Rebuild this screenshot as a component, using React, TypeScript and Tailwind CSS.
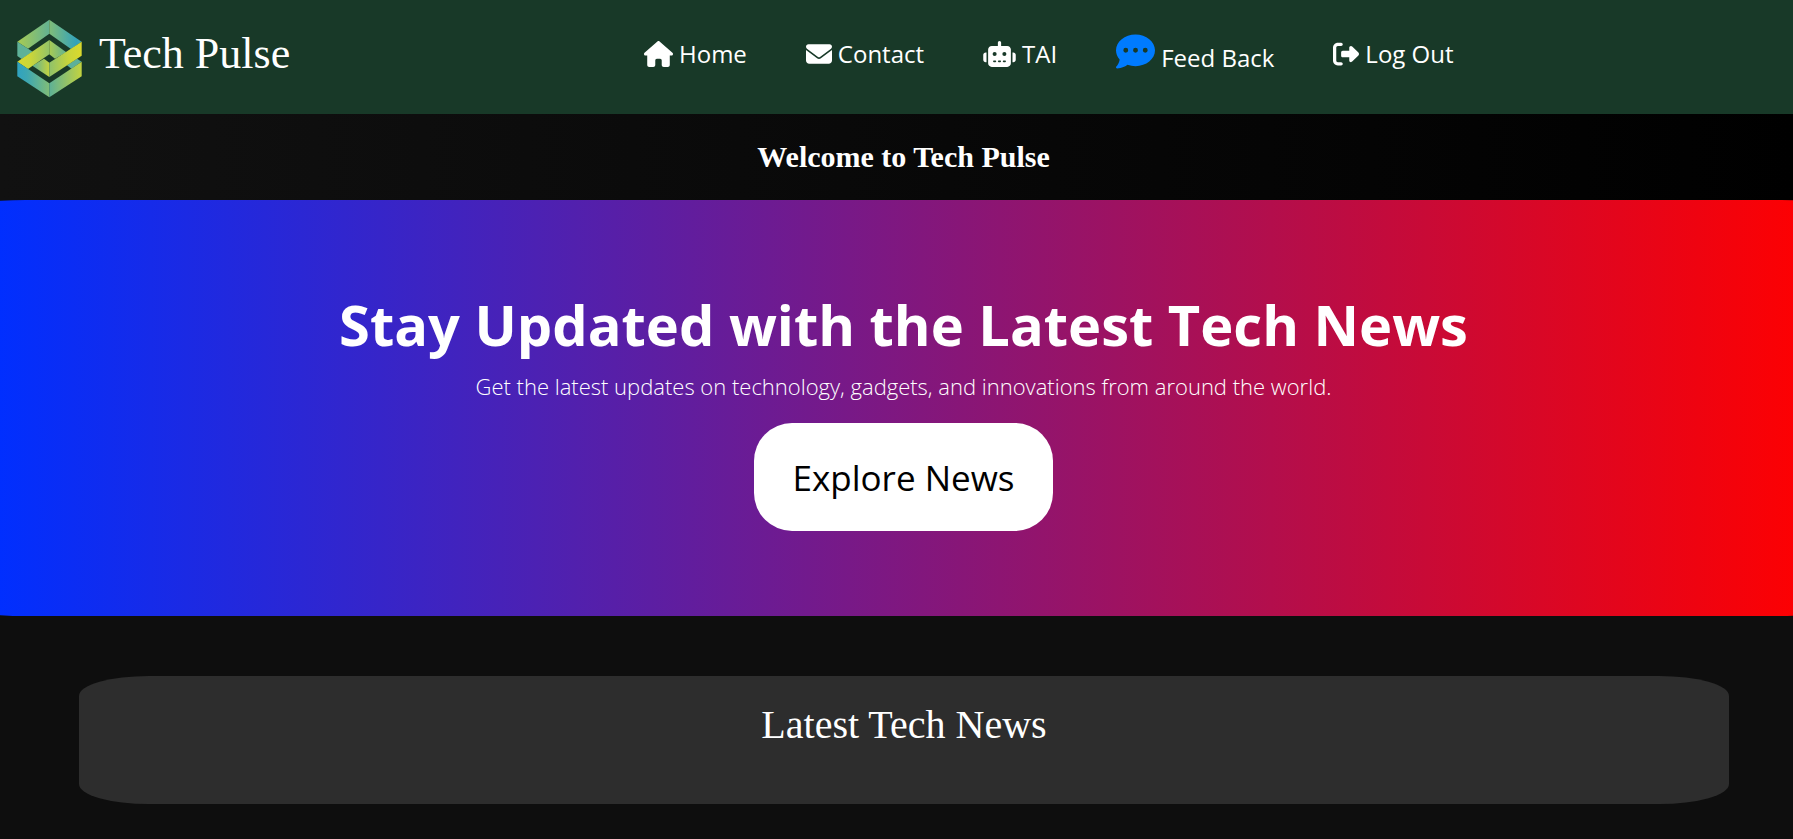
import type { ReactNode } from 'react';
import {
  FaCommentDots,
  FaEnvelope,
  FaHouse,
  FaRightFromBracket,
  FaRobot,
} from 'react-icons/fa6';

type TNavItem = {
  label: string;
  icon: ReactNode;
};

const navItems: TNavItem[] = [
  { label: 'Home', icon: <FaHouse className="h-[26px] w-[29px]" /> },
  { label: 'Contact', icon: <FaEnvelope className="size-[26px]" /> },
  { label: 'TAI', icon: <FaRobot className="h-[26px] w-[33px]" /> },
  {
    label: 'Feed Back',
    icon: <FaCommentDots className="-mt-[6px] size-[39px] text-[#007bff]" />,
  },
  { label: 'Log Out', icon: <FaRightFromBracket className="size-[26px]" /> },
];

const Logo = () => (
  <svg viewBox="0 0 270 285" className="h-[95px] w-[90px]" aria-hidden="true">
    <defs>
      <linearGradient id="lime-teal">
        <stop offset="0" stopColor="#a9cb52" />
        <stop offset="1" stopColor="#62b292" />
      </linearGradient>
      <linearGradient id="green-blue">
        <stop offset="0" stopColor="#80bd78" />
        <stop offset="0.85" stopColor="#32a2bb" />
        <stop offset="1" stopColor="#4fa9a5" />
      </linearGradient>
      <linearGradient id="yellow-green">
        <stop offset="0" stopColor="#d8d930" />
        <stop offset="0.4" stopColor="#cbd638" />
        <stop offset="1" stopColor="#94c368" />
      </linearGradient>
      <linearGradient id="green-yellow">
        <stop offset="0" stopColor="#8fc26b" />
        <stop offset="0.6" stopColor="#c8d53a" />
        <stop offset="1" stopColor="#dad92d" />
      </linearGradient>
      <linearGradient id="blue-green">
        <stop offset="0" stopColor="#2fa2c0" />
        <stop offset="0.3" stopColor="#3da7b2" />
        <stop offset="1" stopColor="#80bd78" />
      </linearGradient>
      <linearGradient id="teal-lime">
        <stop offset="0" stopColor="#5db096" />
        <stop offset="1" stopColor="#c3d33f" />
      </linearGradient>
    </defs>
    <path d="M37 95 133 29V71L69 116Z" fill="url(#lime-teal)" />
    <path d="M133 29 230 95 198 117 133 71Z" fill="url(#green-blue)" />
    <path d="M37 95 69 116 83 125 50 147 37 138Z" fill="#5eb198" />
    <path d="M230 155 216 146 186 166 199 176Z" fill="#5db09a" />
    <path d="M133 90 184 127 150 146 133 133Z" fill="url(#lime-teal)" />
    <path d="M117 146 133 158V201L82 167Z" fill="url(#teal-lime)" />
    <path d="M37 155 133 90V133L69 177Z" fill="url(#yellow-green)" />
    <path d="M230 95V137L133 201V158Z" fill="url(#green-yellow)" />
    <path d="M37 155 133 220V262L37 199Z" fill="url(#blue-green)" />
    <path d="M133 220 230 155V199L133 262Z" fill="url(#teal-lime)" />
  </svg>
);

const Header = () => (
  <header className="flex h-[114px] items-start bg-[#183928] text-white">
    <a href="#" className="flex w-[644px] shrink-0 items-start pt-[10px] pl-[5px]">
      <Logo />
      <span className="pt-[18px] pl-1 font-['Liberation_Serif',serif] text-[44px] leading-[52px]">
        Tech Pulse
      </span>
    </a>
    <nav className="flex h-[108px] items-center gap-[59px]">
      {navItems.map((item) => (
        <a
          key={item.label}
          href="#"
          className="flex items-end gap-[6px] text-2xl leading-[26px] whitespace-nowrap"
        >
          {item.icon}
          {item.label}
        </a>
      ))}
    </nav>
  </header>
);

const Hero = () => (
  <section className="-mx-16 flex h-[416px] flex-col items-center rounded-[90px/20px] bg-linear-to-r/srgb from-[#002fff] from-3% to-[#ff0000] to-97% pt-[82px] text-center text-white">
    <h1 className="text-[56px] leading-[84px] font-bold whitespace-nowrap">
      Stay Updated with the Latest Tech News
    </h1>
    <p className="pt-[2px] text-[22px] leading-9 font-light">
      Get the latest updates on technology, gadgets, and innovations from around
      the world.
    </p>
    <button
      type="button"
      className="mt-[19px] rounded-[38px] bg-white px-[39px] pt-[29px] pb-[27px] text-[35px] leading-[52px] text-black"
    >
      Explore News
    </button>
  </section>
);

const LatestNews = () => (
  <section className="mr-16 ml-[65px] mt-[60px] h-32 rounded-[70px/20px] bg-[#2d2d2d] pt-[26px] text-center">
    <h2 className="font-['Liberation_Serif',serif] text-[40px] leading-[46px]">
      Latest Tech News
    </h2>
  </section>
);

const App = () => {
  return (
    <div className="min-h-screen bg-[#0e0e0e] font-['Open_Sans',sans-serif] text-white">
      <Header />
      <main className="overflow-hidden">
        <div className="bg-linear-to-r/srgb from-[#111111] to-black pl-[14px]">
          <h2 className="pt-[26px] pb-[26px] text-center font-['Liberation_Serif',serif] text-[30px] leading-[34px] font-bold">
            Welcome to Tech Pulse
          </h2>
        </div>
        <div className="-mr-[14px]">
          <Hero />
        </div>
        <div className="-mr-[14px] px-[14px]">
          <LatestNews />
        </div>
      </main>
    </div>
  );
};

export default App;
